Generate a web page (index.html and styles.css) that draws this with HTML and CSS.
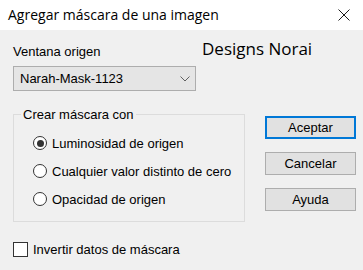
FILE: index.html
```html
<!DOCTYPE html>
<html>
<head>
<meta charset="utf-8">
<link rel="stylesheet" href="styles.css">
</head>
<body>
<div class="window">
  <div class="titlebar">
    <span class="title">Agregar máscara de una imagen</span>
    <svg class="close" width="12" height="12" viewBox="0 0 12 12"><path d="M0.5 0.5L11.5 11.5M11.5 0.5L0.5 11.5" stroke="#1a1a1a" stroke-width="1" fill="none"/></svg>
  </div>
  <div class="body">
    <div class="top">
      <div class="source">
        <div class="label">Ventana origen</div>
        <div class="combo">
          <span>Narah-Mask-1123</span>
          <svg class="chev" width="10" height="6" viewBox="0 0 10 6"><path d="M0.5 0.5L5 5L9.5 0.5" stroke="#606060" stroke-width="1" fill="none"/></svg>
        </div>
      </div>
      <div class="brand">Designs Norai</div>
    </div>
    <div class="middle">
      <fieldset class="group">
        <legend>Crear máscara con</legend>
        <div class="opt"><span class="radio on"></span><span>Luminosidad de origen</span></div>
        <div class="opt"><span class="radio"></span><span>Cualquier valor distinto de cero</span></div>
        <div class="opt"><span class="radio"></span><span>Opacidad de origen</span></div>
      </fieldset>
      <div class="buttons">
        <div class="btn default">Aceptar</div>
        <div class="btn">Cancelar</div>
        <div class="btn">Ayuda</div>
      </div>
    </div>
    <div class="check"><span class="box"></span><span>Invertir datos de máscara</span></div>
  </div>
</div>
</body>
</html>
```
FILE: styles.css
```css
html, body { margin: 0; padding: 0; }
body {
  width: 363px; height: 270px; overflow: hidden;
  background: #f0f0f0;
  font-family: "Liberation Sans", Arial, sans-serif;
  font-size: 13px; color: #000;
}
.window { width: 363px; height: 270px; }
.titlebar {
  height: 30px; background: #fff;
  display: flex; align-items: center; justify-content: space-between;
  padding: 0 13px 0 8px; box-sizing: border-box;
}
.title { font-family: "Open Sans", sans-serif; font-size: 14px; color: #000; line-height: 20px; }
.close { display: block; }
.body { padding: 14px 7px 0 13px; }
.top { display: flex; align-items: flex-start; }
.source { width: 183px; }
.label { line-height: 15px; height: 15px; }
.combo {
  margin-top: 7px; height: 25px; box-sizing: border-box;
  border: 1px solid #adadad; background: #e5e5e5;
  display: flex; align-items: center; justify-content: space-between;
  padding: 0 5px 0 6px;
}
.chev { display: block; }
.brand {
  font-family: "Open Sans", sans-serif; font-size: 17px; line-height: 22px;
  margin-left: 6px; margin-top: -6px; color: #000;
}
.middle { display: flex; align-items: flex-start; margin-top: 16px; }
.group {
  margin: 0; width: 232px; box-sizing: border-box;
  border: 1px solid #dcdcdc; padding: 7px 7px 8px 19px;
  min-inline-size: 0;
}
.group legend { padding: 0 2px; line-height: 15px; margin-left: -12px; }
.opt { display: flex; align-items: center; height: 28px; gap: 5px; }
.radio {
  width: 14px; height: 14px; box-sizing: border-box; border-radius: 50%;
  border: 1px solid #333; background: #fff; position: relative; flex: none;
}
.radio.on::after {
  content: ""; position: absolute; left: 2.5px; top: 2.5px; width: 7px; height: 7px;
  border-radius: 50%; background: #333;
}
.buttons { margin-left: 20px; margin-top: 9px; display: flex; flex-direction: column; gap: 13px; }
.btn {
  width: 91px; height: 23px; box-sizing: border-box;
  border: 1px solid #adadad; background: #e1e1e1;
  display: flex; align-items: center; justify-content: center;
}
.btn.default { border: 2px solid #0078d7; }
.check { display: flex; align-items: center; gap: 5px; margin-top: 20px; }
.box {
  width: 15px; height: 15px; box-sizing: border-box;
  border: 1px solid #333; background: #fff; flex: none;
}
```
